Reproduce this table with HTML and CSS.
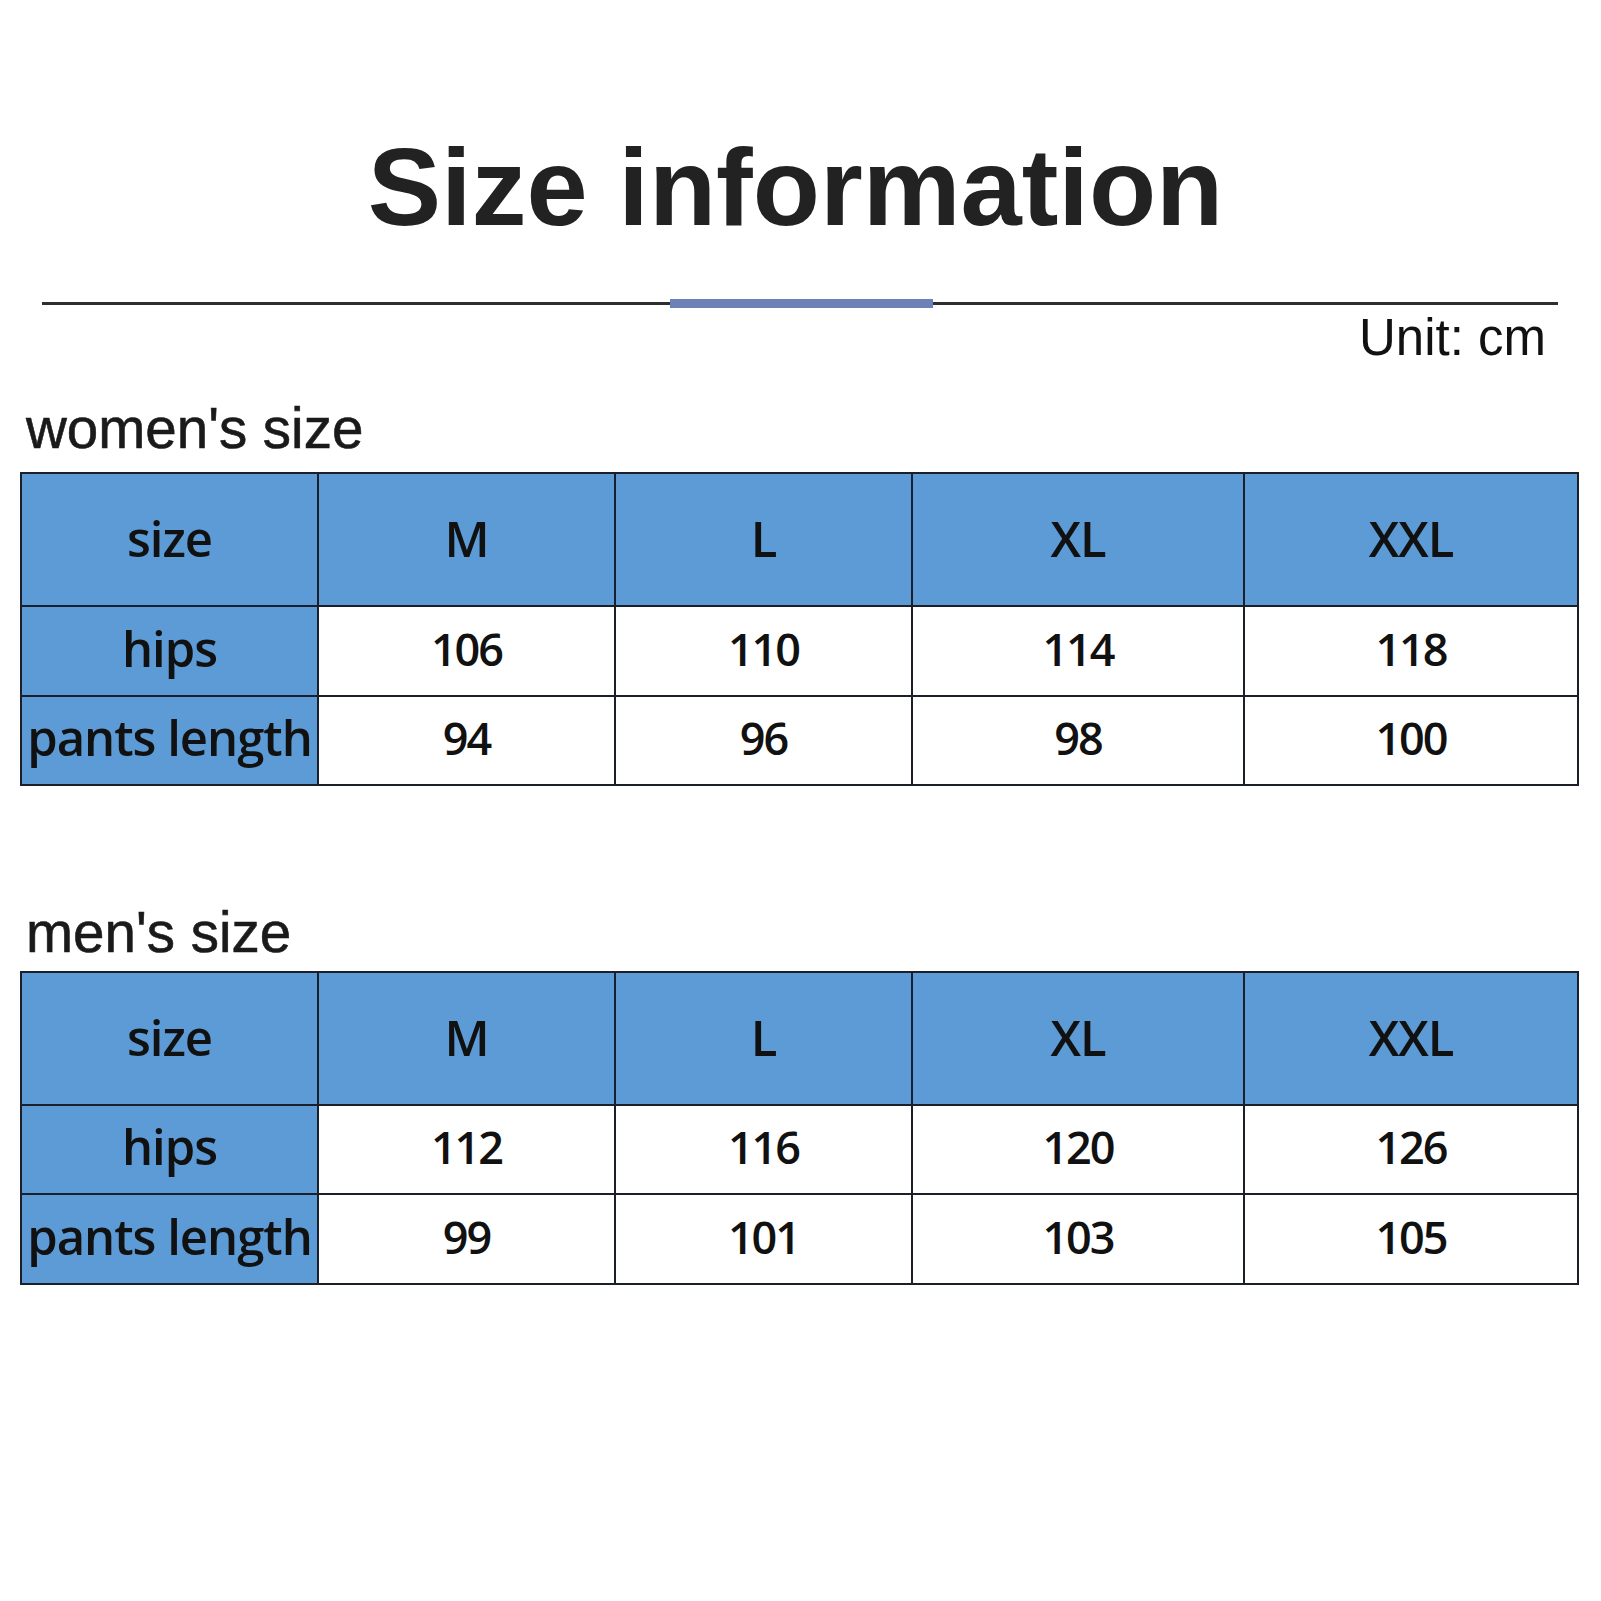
FILE: index.html
```html
<!DOCTYPE html>
<html lang="en">
<head>
<meta charset="utf-8">
<title>Size information</title>
<link rel="stylesheet" href="styles.css">
</head>
<body>
<div class="page">
  <h1 class="title">Size information</h1>
  <div class="rule">
    <span class="rule-seg rule-left"></span>
    <span class="rule-bar"></span>
    <span class="rule-seg rule-right"></span>
  </div>
  <div class="unit">Unit: cm</div>

  <h2 class="section women">women's size</h2>
  <table class="sizes">
    <colgroup><col class="c1"><col class="c2"><col class="c3"><col class="c4"><col class="c5"></colgroup>
    <tr class="head"><td class="lab">size</td><td>M</td><td>L</td><td>XL</td><td>XXL</td></tr>
    <tr class="r1"><td class="lab">hips</td><td class="num">106</td><td class="num">110</td><td class="num">114</td><td class="num">118</td></tr>
    <tr class="r2"><td class="lab">pants length</td><td class="num">94</td><td class="num">96</td><td class="num">98</td><td class="num">100</td></tr>
  </table>

  <h2 class="section men">men's size</h2>
  <table class="sizes">
    <colgroup><col class="c1"><col class="c2"><col class="c3"><col class="c4"><col class="c5"></colgroup>
    <tr class="head"><td class="lab">size</td><td>M</td><td>L</td><td>XL</td><td>XXL</td></tr>
    <tr class="r1 m"><td class="lab">hips</td><td class="num">112</td><td class="num">116</td><td class="num">120</td><td class="num">126</td></tr>
    <tr class="r2 m"><td class="lab">pants length</td><td class="num">99</td><td class="num">101</td><td class="num">103</td><td class="num">105</td></tr>
  </table>
</div>
</body>
</html>
```
FILE: styles.css
```css
html, body {
  margin: 0;
  padding: 0;
  background: #ffffff;
}
.page {
  width: 1601px;
  height: 1601px;
  overflow: hidden;
  font-family: "Liberation Sans", Arial, sans-serif;
}
.title {
  margin: 132px 0 0 0;
  padding-right: 10px;
  font-size: 110px;
  line-height: 110px;
  height: 110px;
  font-weight: bold;
  color: #222222;
  text-align: center;
}
.rule {
  margin: 56px 43px 0 42px;
  height: 10px;
  display: flex;
  align-items: center;
}
.rule-seg {
  height: 3px;
  background: #2e2e2e;
}
.rule-left {
  width: 628px;
}
.rule-right {
  flex: 1;
}
.rule-bar {
  width: 263px;
  height: 9px;
  background: #6e80b8;
}
.unit {
  margin-top: 4px;
  padding-right: 55px;
  text-align: right;
  font-size: 51px;
  line-height: 51px;
  color: #111111;
}
.section {
  margin: 0;
  padding-left: 26px;
  font-size: 56.5px;
  line-height: 57px;
  font-weight: normal;
  color: #1a1a1a;
  -webkit-text-stroke: 0.6px #1a1a1a;
}
.women {
  margin-top: 37px;
}
.men {
  margin-top: 118px;
}
.sizes {
  border-collapse: collapse;
  table-layout: fixed;
  width: 1557px;
  margin-left: 20px;
  font-family: "Open Sans", "Noto Sans", sans-serif;
  color: #111111;
}
.women + .sizes {
  margin-top: 15px;
}
.men + .sizes {
  margin-top: 10px;
}
.c1, .c2, .c3 { width: 297px; }
.c4 { width: 332px; }
.c5 { width: 334px; }
.sizes td {
  border: 2px solid #1b1f2a;
  padding: 0 0 6px 0;
  text-align: center;
  vertical-align: middle;
  font-size: 49px;
  font-weight: 600;
  letter-spacing: -1px;
  line-height: 1;
  white-space: nowrap;
  overflow: visible;
}
.head td {
  background: #5c9bd5;
  height: 128px;
  padding-bottom: 3px;
}
.r1 td { height: 82px; }
.r2 td { height: 81px; }
.r1.m td { height: 81px; }
.r2.m td { height: 82px; }
.sizes td.lab {
  background: #5c9bd5;
  letter-spacing: -1px;
}
.sizes td.num {
  background: #ffffff;
  font-size: 45px;
  letter-spacing: -2px;
}
```
